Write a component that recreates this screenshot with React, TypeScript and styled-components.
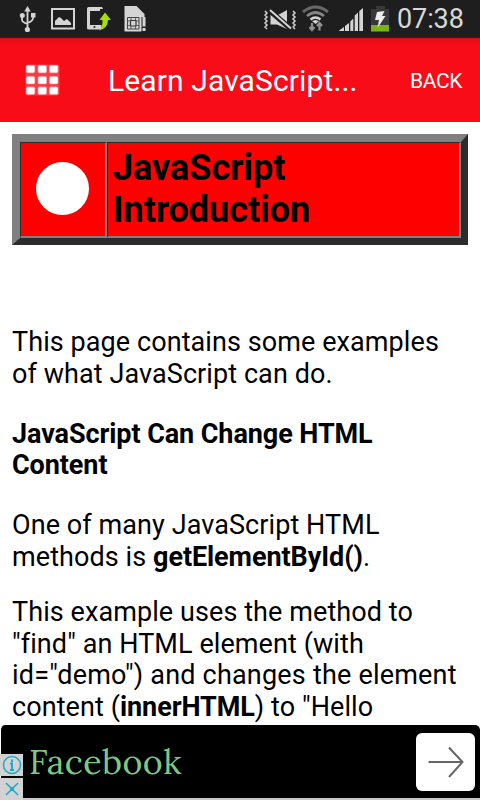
import React from 'react'
import styled, { createGlobalStyle } from 'styled-components'

const GlobalStyle = createGlobalStyle`
  *{
    box-sizing: border-box;
  }
  body{
    margin: 0;
    background: white;
    color: black;
    font-family: Roboto, "Liberation Sans", sans-serif;
  }
`
const Screen = styled.div`
  width: 480px;
  height: 800px;
  overflow: hidden;
  display: flex;
  flex-direction: column;
`
const StatusBar = styled.div`
  height: 38px;
  flex: none;
  background: #1e1e1e;
  color: #d8d8d8;
  display: flex;
  justify-content: space-between;
  align-items: center;
  padding: 0 16px 0 18px;
  >svg{
    flex: none;
  }
`
const StatusRight = styled.div`
  display: flex;
  gap: 7px;
`
const Clock = styled.span`
  font-size: 27px;
  line-height: 39px;
  height: 38px;
  width: 67px;
  white-space: nowrap;
  letter-spacing: -0.1px;
`
const Header = styled.header`
  height: 84px;
  flex: none;
  display: flex;
  align-items: center;
  background: linear-gradient(#e30c14, #f80c18 8px);
  color: white;
  padding: 0 18px 0 24px;
`
const Title = styled.div`
  flex: 1;
  margin-left: 47px;
  font-size: 30px;
  line-height: 84px;
  padding-top: 1px;
  letter-spacing: 0.12px;
  white-space: nowrap;
`
const Back = styled.div`
  font-size: 21px;
  line-height: 84px;
  padding-top: 1px;
  letter-spacing: -0.4px;
`
const Content = styled.main`
  flex: 1;
  min-height: 0;
  overflow: hidden;
  padding: 12px 12px 0;
`
const Banner = styled.div`
  height: 111px;
  display: flex;
  background: red;
  border-style: solid;
  border-width: 8px 7px 7px 8px;
  border-color: #808080 #2c2c2c #2c2c2c #808080;
`
const Cell = styled.div<{ $width?: number }>`
  ${p => p.$width ? `width: ${p.$width}px;` : 'flex: 1;'}
  border-style: solid;
  border-width: 1px 2px 2px 1px;
  border-color: #2c2c2c #808080 #808080 #2c2c2c;
  display: flex;
  align-items: center;
  padding-bottom: 2px;
`
const Dot = styled.div`
  width: 53px;
  height: 53px;
  margin-left: 15px;
  border-radius: 50%;
  background: white;
  box-shadow: 0 0 1px #a33;
`
const Heading = styled.h1`
  margin: 0 0 0 5px;
  font-size: 36px;
  line-height: 42px;
`
const Text = styled.p<{ $top: number, $bold?: boolean }>`
  margin: ${p => p.$top}px 0 0;
  font-size: 27px;
  line-height: 31.75px;
  font-weight: ${p => p.$bold ? 700 : 400};
  letter-spacing: ${p => p.$bold ? -0.08 : 0.08}px;
  white-space: nowrap;
  b{
    letter-spacing: -0.08px;
  }
`
const Wide = styled.span`
  letter-spacing: 0.2px;
`
const AdBanner = styled.footer`
  position: relative;
  height: 75px;
  flex: none;
  display: flex;
  align-items: center;
  justify-content: space-between;
  background: black;
  border-bottom: 2px solid #c8c8c8;
  border-left: 1px solid white;
  border-radius: 5px 5px 0 0;
  padding: 0 5px 0 28px;
`
const AdTitle = styled.span`
  font-family: Lora, "Liberation Serif", serif;
  font-size: 34px;
  line-height: 73px;
  letter-spacing: 0.5px;
  color: #7fc883;
`
const AdButton = styled.div`
  width: 59px;
  height: 58px;
  border-radius: 6px;
  background: white;
  display: flex;
  align-items: center;
  justify-content: center;
`
const AdChoices = styled.div`
  position: absolute;
  left: -1px;
  bottom: -2px;
  width: 23px;
  display: grid;
  gap: 2px;
`
const Choice = styled.div`
  height: 22px;
  background: #d2d2d2;
  display: flex;
  align-items: center;
  justify-content: center;
`

const NoticeIcons = () => (
  <svg width="134" height="38" viewBox="18 0 134 38" fill="none" stroke="#d4d4d4">
    {/* usb */}
    <path d="M27.5 9v20M22 16v4q0 2 5.500 4M33 16v2q0 3-5.500 5" strokeWidth="1.800" />
    <path d="M24.300 11.500 27.500 6l3.200 5.500z" fill="#d4d4d4" stroke="none" />
    <circle cx="22.300" cy="15.500" r="2.500" fill="#d4d4d4" stroke="none" />
    <path d="M31 13h4.500v4.500H31z" fill="#d4d4d4" stroke="none" />
    <circle cx="27.400" cy="29.500" r="2.600" fill="#d4d4d4" stroke="none" />
    {/* picture */}
    <path d="M52 9h22v19.500H52z" strokeWidth="2" />
    <path d="M55 25v-4l4-4 2 1 3 3 3-2 4 4v2z" fill="#d4d4d4" stroke="none" />
    {/* phone update */}
    <path d="M102 7H88.500Q87 7 87 8.500v19.500q0 1.500 1.500 1.500H100q1.500 0 1.500-1.500v-3H90V11h10V9h3z" fill="#d4d4d4" stroke="none" />
    <circle cx="94.500" cy="27" r="1" fill="#1e1e1e" stroke="none" />
    <path d="M105 12.500 111 20h-3q0 8-9 10.500 4-4 3.500-10.500h-3z" fill="#a6e000" stroke="none" />
    {/* sim card */}
    <path d="M124.500 6h12l8 8v3h-3v14.500h-17z" fill="#d4d4d4" stroke="none" />
    <path d="M127.500 17.500h11.500v11.500h-11.500z" stroke="#444" strokeWidth="1" />
    <path d="M130.500 20.500h5.500v5.500h-5.500z" stroke="#333" strokeWidth="1.200" />
    <path d="M128 21h2.500M128 25.500h2.500M136 21h3M136 25.500h3M131 18v2.500M135.500 18v2.500M131 26v3M135.500 26v3" stroke="#555" strokeWidth="0.900" />
    <path d="M142.500 17h3v9.500h-3zM142.500 28h3v3h-3z" fill="#d4d4d4" stroke="none" />
  </svg>
)

const SystemIcons = () => (
  <svg width="126" height="38" viewBox="264 0 126 38" fill="none" stroke="#d4d4d4">
    {/* muted, vibrate */}
    <path d="m265 11 2 2-2 2 2 2-2 2 2 2-2 2 2 2-2 2 2 2M293 11l2 2-2 2 2 2-2 2 2 2-2 2 2 2-2 2 2 2" strokeWidth="1.500" />
    <path d="M270.500 15v9.500h6.500l10 4.500V10l-8 4.500z" fill="#d4d4d4" stroke="none" />
    <path d="m269 10 22 19" stroke="#1e1e1e" strokeWidth="5.500" />
    <path d="m270 10 21 18.500" strokeWidth="2" />
    {/* wifi */}
    <path d="M303 12q12.500-10 25 0" stroke="#686868" strokeWidth="3" />
    <path d="M307 16q8.500-7 17 0" stroke="#858585" strokeWidth="2.700" />
    <path d="M310.500 19.500q5-4 10 0" strokeWidth="2.500" />
    <path d="m312 21 3.500-1 3.500 1-3.500 3z" fill="#d4d4d4" stroke="none" />
    <path d="M312 23v7m-2.500-3 2.500 3 2.500-3M319.500 30.500v-7.500m-2.500 3 2.500-3 2.500 3" stroke="#909090" strokeWidth="2.200" />
    {/* signal */}
    <path d="M339 31v-.5l5-3.500v4zM345 31v-5l4-3v8zM350.300 31v-9.500l3-3V31zM354.700 31V15.500l3.300-3V31zM359.300 31V11l3.700-3v23z" fill="#d4d4d4" stroke="none" />
    {/* battery */}
    <path d="M376 6h9v3h4v16h-18V9h5z" fill="#383838" stroke="none" />
    <path d="M371 25h18v6.500h-18z" fill="#78b413" stroke="none" />
    <path d="m377 12 7.500-1-2.500 5h3.500l-8 12 1.500-8H375z" fill="#ededed" stroke="none" />
  </svg>
)

const GridIcon = () => (
  <svg width="37" height="34" viewBox="0 0 37 34" fill="white">
    <rect x="1.500" y="1.500" width="34" height="31" rx="2" fillOpacity="0.2" />
    {[2.2, 14, 25.4].map(x => [2.4, 13.5, 24].map(y =>
      <g key={x + '-' + y}>
        <rect x={x - 0.4} y={y - 0.4} width="9.400" height="8.200" rx="2" fillOpacity="0.4" />
        <rect x={x + 0.3} y={y + 0.2} width="8" height="7" rx="1" />
      </g>
    ))}
  </svg>
)

function App() {
  return (
    <>
      <GlobalStyle />
      <Screen>
        <StatusBar>
          <NoticeIcons />
          <StatusRight>
            <SystemIcons />
            <Clock>07:38</Clock>
          </StatusRight>
        </StatusBar>
        <Header>
          <GridIcon />
          <Title>Learn JavaScript...</Title>
          <Back>BACK</Back>
        </Header>
        <Content>
          <Banner>
            <Cell $width={87}><Dot /></Cell>
            <Cell><Heading>JavaScript<br />Introduction</Heading></Cell>
          </Banner>
          <Text $top={82}>
            This page contains some examples<br />
            of what JavaScript can do.
          </Text>
          <Text $top={28.2} $bold>
            JavaScript Can Change HTML<br />
            Content
          </Text>
          <Text $top={27.8}>
            One of many JavaScript HTML<br />
            methods is <b>getElementById()</b>.
          </Text>
          <Text $top={23.3}>
            This example uses the method to<br />
            "find" an HTML element (with<br />
            <Wide>id="demo") and changes the element</Wide><br />
            content (<b>innerHTML</b>) to "Hello
          </Text>
        </Content>
        <AdBanner>
          <AdTitle>Facebook</AdTitle>
          <AdButton>
            <svg width="36" height="32" viewBox="0 0 36 32" fill="none" stroke="#666" strokeWidth="2">
              <path d="M0.500 16H34M21 1.500 34.500 16 21 31" />
            </svg>
          </AdButton>
          <AdChoices>
            <Choice>
              <svg width="20" height="20" viewBox="0 0 20 20" fill="none" stroke="#1fa9c4">
                <circle cx="10" cy="10" r="8.500" strokeWidth="1.500" />
                <path d="M10 4.500v2.500M8 8.500h2V15M8 15h4" strokeWidth="2" />
              </svg>
            </Choice>
            <Choice>
              <svg width="14" height="14" viewBox="0 0 14 14" fill="none" stroke="#1fa9c4" strokeWidth="1.500">
                <path d="m1 1 12 12M13 1 1 13" />
                <path d="M5.500 5.500h3v3h-3z" strokeWidth="1" />
              </svg>
            </Choice>
          </AdChoices>
        </AdBanner>
      </Screen>
    </>
  )
}

export default App
